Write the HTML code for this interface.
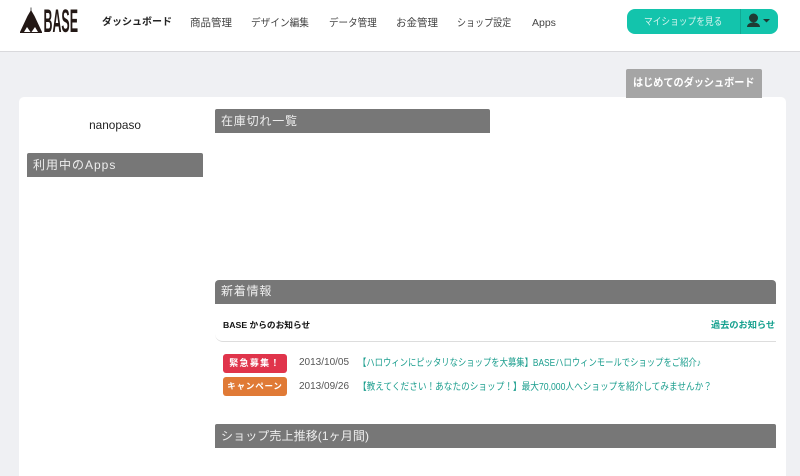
<!DOCTYPE html>
<html lang="ja">
<head>
<meta charset="utf-8">
<title>BASE ダッシュボード</title>
<style>
html,body{margin:0;padding:0;width:800px;height:476px;overflow:hidden;background:#eff0f3;font-family:"Liberation Sans","Noto Sans CJK JP",sans-serif}
.a{position:absolute;white-space:nowrap;transform-origin:0 50%}
#hd{position:absolute;left:0;top:0;width:800px;height:51px;background:#fff;border-bottom:1px solid #d9d9dc}
.nav{position:absolute;top:15px;font-size:10.5px;line-height:16px;color:#444;white-space:nowrap;transform-origin:0 50%}
#card{position:absolute;left:19px;top:97px;width:767px;height:379px;background:#fff;border-radius:5px 5px 0 0}
.bar{position:absolute;background:#777;color:#eee;border-radius:2px 2px 0 0;font-size:12px;line-height:24px;height:24px;letter-spacing:.8px;padding-left:6px;box-sizing:border-box;white-space:nowrap}
.tag{position:absolute;left:223px;width:64px;height:19px;border-radius:3px;color:#fff;font-size:9px;font-weight:bold;line-height:19px;text-align:center;letter-spacing:1.3px}
.date{position:absolute;left:299px;font-size:10px;line-height:14px;color:#555;white-space:nowrap}
.news{position:absolute;left:358px;font-size:10px;line-height:14px;color:#1b9e8e;white-space:nowrap;transform-origin:0 50%}
</style>
</head>
<body>
<div id="hd"></div>
<svg class="a" style="left:18px;top:6px" width="64" height="30" viewBox="0 0 64 30">
<path d="M13 1.500V5" stroke="#555" stroke-width="1"/>
<path d="M13 4 16.500 10 24 26H20L17 21 13.500 26H12.500L9 21 6 26H2L9.500 10Z" fill="#231815"/>
<path d="M2 26.500H24" stroke="#231815" stroke-width="1"/>
<text x="25.500" y="26" font-family="Liberation Sans" font-weight="bold" font-size="32" fill="#231815" textLength="34.500" lengthAdjust="spacingAndGlyphs">BASE</text>
</svg>
<div class="nav" style="left:102px;color:#222;font-weight:bold;font-size:10px">ダッシュボード</div>
<div class="nav" style="left:190px">商品管理</div>
<div class="nav" style="left:251px;transform:scaleX(.92)">デザイン編集</div>
<div class="nav" style="left:329px;transform:scaleX(.91)">データ管理</div>
<div class="nav" style="left:396px">お金管理</div>
<div class="nav" style="left:457px;transform:scaleX(.86)">ショップ設定</div>
<div class="nav" style="left:532px;font-size:10.5px">Apps</div>

<div class="a" style="left:627px;top:9px;width:151px;height:25px;background:#13c4ac;border-radius:8px"></div>
<div class="a" style="left:740px;top:9px;width:1px;height:25px;background:#10a994"></div>
<div class="a" style="left:644px;top:15px;font-size:10px;line-height:15px;color:#d5f3ee;transform:scaleX(.87)">マイショップを見る</div>
<svg class="a" style="left:746px;top:12px" width="28" height="16" viewBox="0 0 28 16">
<circle cx="7.500" cy="6" r="4.500" fill="#1f3a34"/>
<path d="M1 15C1 12 4 10.500 7.500 10.500S14 12 14 15Z" fill="#1f3a34"/>
<path d="M17 7H24L20.500 10.500Z" fill="#1f3a34"/>
</svg>

<div class="a" style="left:626px;top:69px;width:136px;height:30px;background:#a5a5a5;border-radius:2px 2px 0 0"></div>
<div id="card"></div>
<div class="a" style="left:626px;top:97px;width:136px;height:1px;background:#a5a5a5"></div>
<div class="a" style="left:633px;top:76px;font-size:11px;line-height:15px;font-weight:bold;color:#fff;transform:scaleX(.92)">はじめてのダッシュボード</div>

<div class="a" style="left:27px;top:118px;width:176px;text-align:center;font-size:11.800px;line-height:15px;color:#222">nanopaso</div>
<div class="bar" style="left:27px;top:153px;width:176px;letter-spacing:1px">利用中のApps</div>
<div class="bar" style="left:215px;top:109px;width:275px">在庫切れ一覧</div>
<div class="bar" style="left:215px;top:279.500px;width:561px;border-radius:4px 4px 0 0;line-height:23px">新着情報</div>

<div class="a" style="left:223px;top:318px;font-size:8.700px;line-height:14px;font-weight:bold;color:#111">BASE からのお知らせ</div>
<div class="a" style="left:711px;top:318px;font-size:9.200px;line-height:14px;font-weight:bold;color:#14a08e">過去のお知らせ</div>
<div class="a" style="left:215px;top:332px;width:561px;height:9px;border-bottom:1px solid #ddd;border-radius:0 0 0 8px"></div>

<div class="tag" style="top:354px;background:#e0344b">緊急募集！</div>
<div class="date" style="top:356px">2013/10/05</div>
<div class="news" style="top:357px;transform:scaleX(.833)">【ハロウィンにピッタリなショップを大募集】BASEハロウィンモールでショップをご紹介♪</div>
<div class="tag" style="top:377px;background:#e07a36;font-size:8.500px;letter-spacing:.8px">キャンペーン</div>
<div class="date" style="top:380px">2013/09/26</div>
<div class="news" style="top:381px;transform:scaleX(.865)">【教えてください！あなたのショップ！】最大70,000人へショップを紹介してみませんか？</div>

<div class="bar" style="left:215px;top:424px;width:561px;letter-spacing:.1px">ショップ売上推移(1ヶ月間)</div>
</body>
</html>
